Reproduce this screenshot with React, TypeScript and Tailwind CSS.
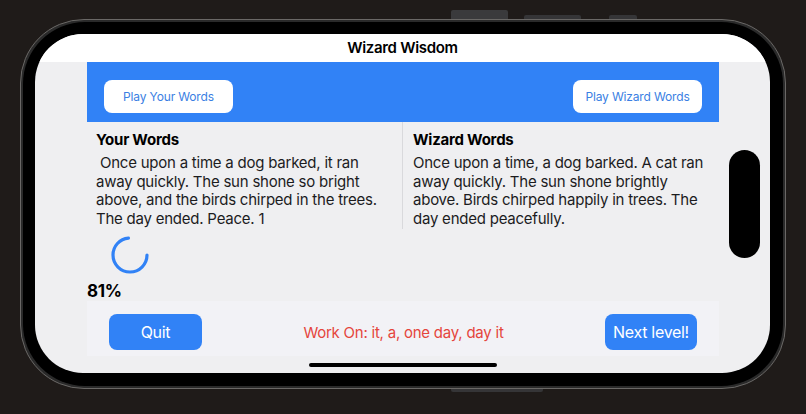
import React from "react";

const yourWords =
  "\u00a0Once upon a time a dog barked, it ran away quickly. The sun shone so bright above, and the birds chirped in the trees. The day ended. Peace. 1";
const wizardWords =
  "Once upon a time, a dog barked. A cat ran away quickly. The sun shone brightly above. Birds chirped happily in trees. The day ended peacefully.";

function ProgressRing({ value }: { value: number }) {
  const r = 17;
  const c = 2 * Math.PI * r;
  return (
    <svg width="40" height="40" viewBox="0 0 40 40">
      <circle
        cx="20"
        cy="20"
        r={r}
        fill="none"
        stroke="#3182f6"
        strokeWidth="3.2"
        strokeLinecap="round"
        strokeDasharray={`${c * value} ${c}`}
      />
    </svg>
  );
}

function WordsColumn({
  title,
  text,
  className
}: {
  title: string;
  text: string;
  className?: string;
}) {
  return (
    <div className={className}>
      <div className="text-[15px] font-bold leading-[18px] tracking-[-0.23px] text-black">{title}</div>
      <p className="mt-[5px] text-[15px] leading-[18.7px] tracking-[-0.23px] text-[#1c1c1e]">{text}</p>
    </div>
  );
}

export default function App() {
  return (
    <div
      className="relative h-[414px] w-[806px] overflow-hidden bg-[#1f1b19] pl-[20px] pt-[19px]"
      style={{ fontFamily: "Inter, 'Noto Sans', sans-serif" }}
    >
      {/* hardware buttons along the frame */}
      <div className="absolute left-[451px] top-[10px] h-[10px] w-[57px] rounded-t-[2px] bg-[#3a3a3c]" />
      <div className="absolute left-[524px] top-[15px] h-[5px] w-[57px] rounded-t-[2px] bg-[#353537]" />
      <div className="absolute left-[609px] top-[15px] h-[5px] w-[28px] rounded-t-[2px] bg-[#353537]" />
      <div className="absolute left-[451px] top-[388px] h-[4px] w-[92px] rounded-b-[2px] bg-[#353537]" />

      {/* phone body */}
      <div className="relative h-[370px] w-[766px] rounded-[64px] border-[1.5px] border-[#6a6866] bg-[#2a2a2a] p-[2px]">
        <div className="h-full w-full rounded-[62px] bg-black pb-[13px] pl-[12px] pr-[13px] pt-[12px]">
          <div className="flex h-full w-full flex-col overflow-hidden rounded-[48px] bg-[#efeff1]">
            <div className="flex h-[28px] shrink-0 items-center justify-center bg-white pt-[1px] text-[15px] font-semibold tracking-[-0.3px] text-black">
              Wizard Wisdom
            </div>

            <div className="flex flex-1 flex-col pl-[52px] pr-[51px]">
              <div className="flex h-[60px] items-start justify-between bg-[#3182f6] px-[17px] pt-[18px]">
                <button className="h-[33px] w-[129px] rounded-[8px] bg-white text-[12px] tracking-[-0.15px] text-[#3b7fe3]">
                  Play Your Words
                </button>
                <button className="h-[33px] w-[129px] rounded-[8px] bg-white text-[12px] tracking-[-0.15px] text-[#3b7fe3]">
                  Play Wizard Words
                </button>
              </div>

              <div className="flex">
                <WordsColumn
                  title="Your Words"
                  text={yourWords}
                  className="w-[316px] border-r border-[#d9d9dc] pl-[9px] pr-[6px] pt-[9px]"
                />
                <WordsColumn
                  title="Wizard Words"
                  text={wizardWords}
                  className="flex-1 pl-[10px] pr-[8px] pt-[9px]"
                />
              </div>

              <div className="ml-[23px] mt-[6px]">
                <ProgressRing value={0.73} />
              </div>
              <div className="mt-[6px] text-[17px] font-bold leading-[20px] tracking-[-0.3px] text-black">81%</div>

              <div className="flex flex-1 items-start justify-between bg-[#f2f2f6] px-[22px] pt-[13px]">
                <button className="h-[36px] w-[93px] rounded-[8px] bg-[#3182f6] text-[16px] tracking-[-0.3px] text-white">
                  Quit
                </button>
                <span className="pt-[8px] text-[15px] tracking-[-0.23px] text-[#e5453c]">
                  Work On: it, a, one day, day it
                </span>
                <button className="h-[36px] w-[92px] rounded-[8px] bg-[#3182f6] text-[16px] tracking-[-0.3px] text-white">
                  Next level!
                </button>
              </div>
            </div>

            <div className="flex h-[17px] shrink-0 items-start justify-center pt-[7px]">
              <div className="h-[4px] w-[188px] rounded-full bg-black" />
            </div>
          </div>
        </div>

        {/* camera island, landscape */}
        <div className="absolute left-[708px] top-[130px] h-[108px] w-[31px] rounded-full bg-black" />
      </div>
    </div>
  );
}
